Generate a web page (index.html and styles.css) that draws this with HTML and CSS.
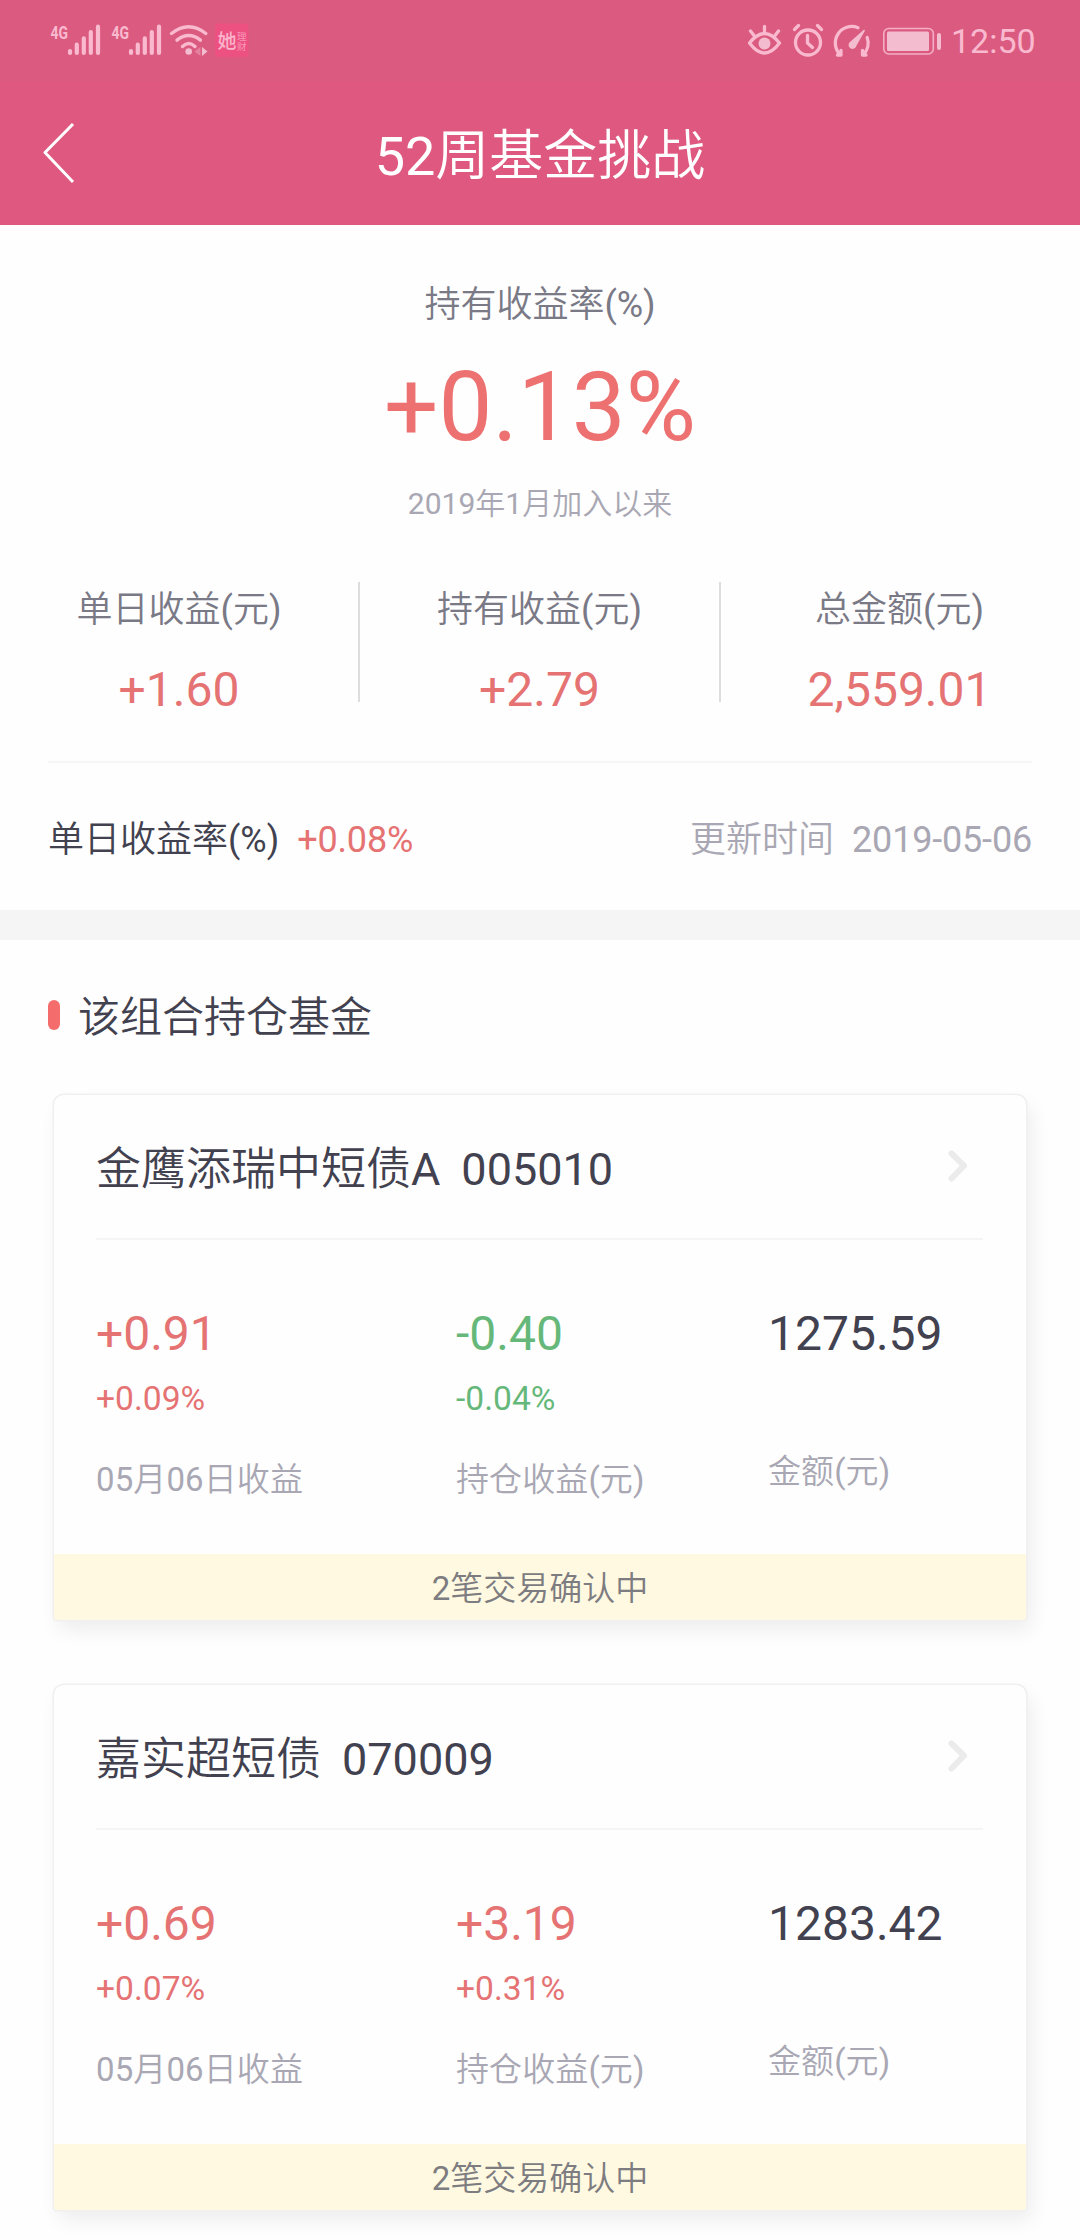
FILE: index.html
```html
<!DOCTYPE html>
<html lang="zh-CN">
<head>
<meta charset="utf-8">
<title>52周基金挑战</title>
<link rel="stylesheet" href="styles.css">
</head>
<body>
<header class="top">
  <div class="status">
    <svg class="status-left" width="220" height="81" viewBox="40 0 220 81">
      <g id="signal">
        <text class="net" x="50.5" y="38.5" textLength="17.5" lengthAdjust="spacingAndGlyphs">4G</text>
        <path class="bars" d="M70 51v2M76.8 44.7V53M83.8 38.3V53M90.8 32V53M98 26.7V53"/>
      </g>
      <use href="#signal" x="61"/>
      <path class="wifi" d="M171.500 33.500Q188.700 20 205.800 33.500M177 40.200Q188.700 31 200.400 40.200M182.500 46.500Q188.700 40.500 195 46.500"/>
      <circle class="solid" cx="188.700" cy="51.500" r="3.300"/>
      <path class="solid faint" d="M200.500 47v9l-6-4.500z"/>
      <path class="solid" d="M202 47v9l5.500-4.500z"/>
      <rect class="app" x="215" y="23.500" width="33.500" height="33.500" rx="3"/>
      <text class="app-main" x="217.500" y="47.500">她</text>
      <text class="app-sub" x="237" y="39.500">理</text>
      <text class="app-sub" x="237" y="49.500">财</text>
    </svg>
    <div class="status-right">
      <svg width="200" height="81" viewBox="745 0 200 81">
        <g class="line">
          <path d="M749.500 43Q764.500 24 779.500 43Q764.500 63 749.500 43Z"/>
          <path d="M764.500 26.500v5M750.500 31l3.500 4.500M778.500 31l-3.500 4.500"/>
          <circle cx="808" cy="42.500" r="12.500"/>
          <path d="M807.500 35.500v7.500l5 4.500M794.500 29.500l4-4M821.500 29.500l-4-4"/>
          <path d="M840.500 55A16.500 16.500 0 0 1 858 27.700M867.200 37.500A16.500 16.500 0 0 1 863 55M841 50.500V55h-3.500M862.500 50.500V55h3.500"/>
        </g>
        <circle class="solid" cx="764.500" cy="43.500" r="6"/>
        <path class="solid" d="M863.800 29.800Q865 29.500 864.800 31L856.500 45.500A4 4 0 1 1 850.500 41.500Z"/>
        <rect class="battery" x="883.800" y="28.500" width="49.500" height="25.500" rx="5"/>
        <rect class="solid" x="887" y="31.500" width="42" height="19.500" rx="1.500"/>
        <rect class="solid" x="937" y="33" width="4" height="17" rx="2"/>
      </svg>
      <span class="clock">12:50</span>
    </div>
  </div>
  <nav class="nav">
    <svg class="back" width="34" height="64" viewBox="0 0 34 64"><path d="M31 3L3 31.500L31 61"/></svg>
    <h1 class="nav-title">52周基金挑战</h1>
  </nav>
</header>

<section class="summary">
  <p class="rate-label">持有收益率(%)</p>
  <p class="rate">+0.13%</p>
  <p class="since">2019年1月加入以来</p>
  <div class="stats">
    <div class="stat"><span class="stat-label">单日收益(元)</span><span class="stat-value">+1.60</span></div>
    <div class="stat"><span class="stat-label">持有收益(元)</span><span class="stat-value">+2.79</span></div>
    <div class="stat"><span class="stat-label">总金额(元)</span><span class="stat-value">2,559.01</span></div>
  </div>
  <div class="daily">
    <span>单日收益率(%)</span><span class="daily-rate">+0.08%</span>
    <span class="updated">更新时间</span><span class="date">2019-05-06</span>
  </div>
</section>

<section class="holdings">
  <h2 class="section-title">该组合持仓基金</h2>
  <article class="card">
    <div class="card-head">
      <h3 class="fund"><span>金鹰添瑞中短债A</span><span>005010</span></h3>
      <svg class="more" width="20" height="32" viewBox="0 0 20 32"><path d="M3.500 3.500L16 15.700L3.500 28.500"/></svg>
    </div>
    <div class="figures">
      <div class="figure up"><span class="value">+0.91</span><span class="pct">+0.09%</span><span class="caption">05月06日收益</span></div>
      <div class="figure down"><span class="value">-0.40</span><span class="pct">-0.04%</span><span class="caption">持仓收益(元)</span></div>
      <div class="figure amount"><span class="value">1275.59</span><span class="caption">金额(元)</span></div>
    </div>
    <p class="pending">2笔交易确认中</p>
  </article>
  <article class="card">
    <div class="card-head">
      <h3 class="fund"><span>嘉实超短债</span><span>070009</span></h3>
      <svg class="more" width="20" height="32" viewBox="0 0 20 32"><path d="M3.500 3.500L16 15.700L3.500 28.500"/></svg>
    </div>
    <div class="figures">
      <div class="figure up"><span class="value">+0.69</span><span class="pct">+0.07%</span><span class="caption">05月06日收益</span></div>
      <div class="figure up"><span class="value">+3.19</span><span class="pct">+0.31%</span><span class="caption">持仓收益(元)</span></div>
      <div class="figure amount"><span class="value">1283.42</span><span class="caption">金额(元)</span></div>
    </div>
    <p class="pending">2笔交易确认中</p>
  </article>
</section>
</body>
</html>
```

FILE: styles.css
```css
* { box-sizing: border-box; }

body {
  margin: 0;
  width: 1080px;
  height: 2240px;
  overflow: hidden;
  background: #fefefe;
  color: #42414f;
  font-family: Roboto, "Noto Sans CJK SC DemiLight", "Noto Sans CJK SC Light", "Noto Sans CJK SC", sans-serif;
}

h1, h2, h3, p { margin: 0; font-weight: 400; }
svg { display: block; }

/* Header */
.top { height: 225px; background: #df587f; color: #fff; }
.status {
  display: flex;
  justify-content: space-between;
  height: 81px;
  padding: 0 44px 0 40px;
  background: #db5b80;
}
.status-right { display: flex; }
.clock {
  width: 85px;
  margin-left: 6px;
  font-size: 34px;
  line-height: 83px;
  color: #f9b9cf;
}
.net { font: 700 18.500px Roboto, sans-serif; fill: #f9b9cf; }
.bars { stroke: #f9b9cf; stroke-width: 4.200; stroke-linecap: round; }
.wifi { fill: none; stroke: #f9b9cf; stroke-width: 3.400; stroke-linecap: round; }
.solid { fill: #f4bccf; }
.faint { opacity: .4; }
.app { fill: #ec5182; }
.app-main { font: 500 19px "Noto Sans CJK SC", sans-serif; fill: #fbb4cc; }
.app-sub { font: 400 9.500px "Noto Sans CJK SC", sans-serif; fill: #f898b8; }
.line { fill: none; stroke: #f9b9cf; stroke-width: 3.300; stroke-linecap: round; stroke-linejoin: round; }
.battery { fill: none; stroke: #f4aec5; stroke-width: 1.600; }

.nav {
  display: grid;
  grid-template-columns: 78px 1fr 78px;
  align-items: center;
  height: 144px;
}
.back { margin: 0 0 1px 42px; fill: none; stroke: #fff; stroke-width: 3; stroke-linejoin: round; }
.nav-title { font-size: 54px; line-height: 64px; padding-top: 7px; text-align: center; }

/* Summary */
.summary { height: 715px; padding-top: 55px; border-bottom: 30px solid #f5f5f5; text-align: center; }
.rate-label { font-size: 36px; line-height: 50px; color: #7a7986; }
.rate { margin-top: 17px; font-size: 96px; line-height: 120px; color: #ed7171; }
.since { margin-top: 17px; font-size: 30px; line-height: 40px; color: #a8a7b3; }
.stats {
  display: grid;
  grid-template-columns: 360px 361px 359px;
  grid-template-rows: 120px;
  height: 120px;
  margin-top: 58px;
}
.stat { display: flex; flex-direction: column; padding-top: 3px; border-right: 2px solid #ddd; }
.stat:last-child { border-right-color: transparent; }
.stat-label { font-size: 36px; line-height: 50px; color: #7a7986; }
.stat-value { margin-top: 25px; font-size: 48px; line-height: 60px; color: #e57373; }
.daily {
  display: flex;
  margin: 59px 48px 0;
  border-top: 2px solid #f6f6f6;
  padding-top: 52px;
  font-size: 36px;
  line-height: 50px;
}
.daily-rate { margin-left: 18px; letter-spacing: -.18px; color: #e57373; }
.updated { margin-left: auto; color: #a8a7b3; }
.date { margin-left: 18px; letter-spacing: -.18px; color: #a8a7b3; }

/* Holdings */
.holdings { padding: 48px 54px 0; }
.section-title {
  display: flex;
  align-items: center;
  margin-left: -6px;
  font-size: 42px;
  line-height: 60px;
}
.section-title::before {
  content: "";
  width: 12px;
  height: 30px;
  margin: 0 18px 6px 0;
  border-radius: 6px;
  background: #f56c6c;
}
.card {
  height: 525px;
  margin: 47px 0 0;
  border-radius: 10px 10px 3px 3px;
  background: #fefefe;
  box-shadow: 0 0 0 1.500px #f0f0f1, 5px 10px 20px rgba(0, 0, 0, .07);
}
.card + .card { margin-top: 65px; }
.card-head {
  display: flex;
  justify-content: space-between;
  height: 145px;
  margin: 0 43px 0 42px;
  padding: 45px 15px 0 0;
  border-bottom: 2px solid #f5f5f5;
}
.fund { display: flex; gap: 21px; font-size: 45px; line-height: 60px; }
.more { margin-top: 10px; fill: none; stroke: #ebebeb; stroke-width: 6; stroke-linecap: round; stroke-linejoin: round; }
.figures { display: grid; grid-template-columns: 360px 312px 1fr; height: 314px; padding: 64px 0 0 42px; }
.figure { display: flex; flex-direction: column; }
.value { font-size: 48px; line-height: 60px; }
.pct { margin-top: 15px; font-size: 33.600px; line-height: 40px; }
.caption { margin-top: 41px; font-size: 33px; line-height: 40px; letter-spacing: .1px; color: #a8a7b3; }
.amount .caption { margin-top: 88px; }
.up { color: #e57373; }
.down { color: #66b87a; }
.pending {
  height: 66px;
  border-radius: 0 0 3px 3px;
  background: #fef9e0;
  font-size: 33px;
  line-height: 70px;
  text-align: center;
  color: #7d7c80;
}
```
